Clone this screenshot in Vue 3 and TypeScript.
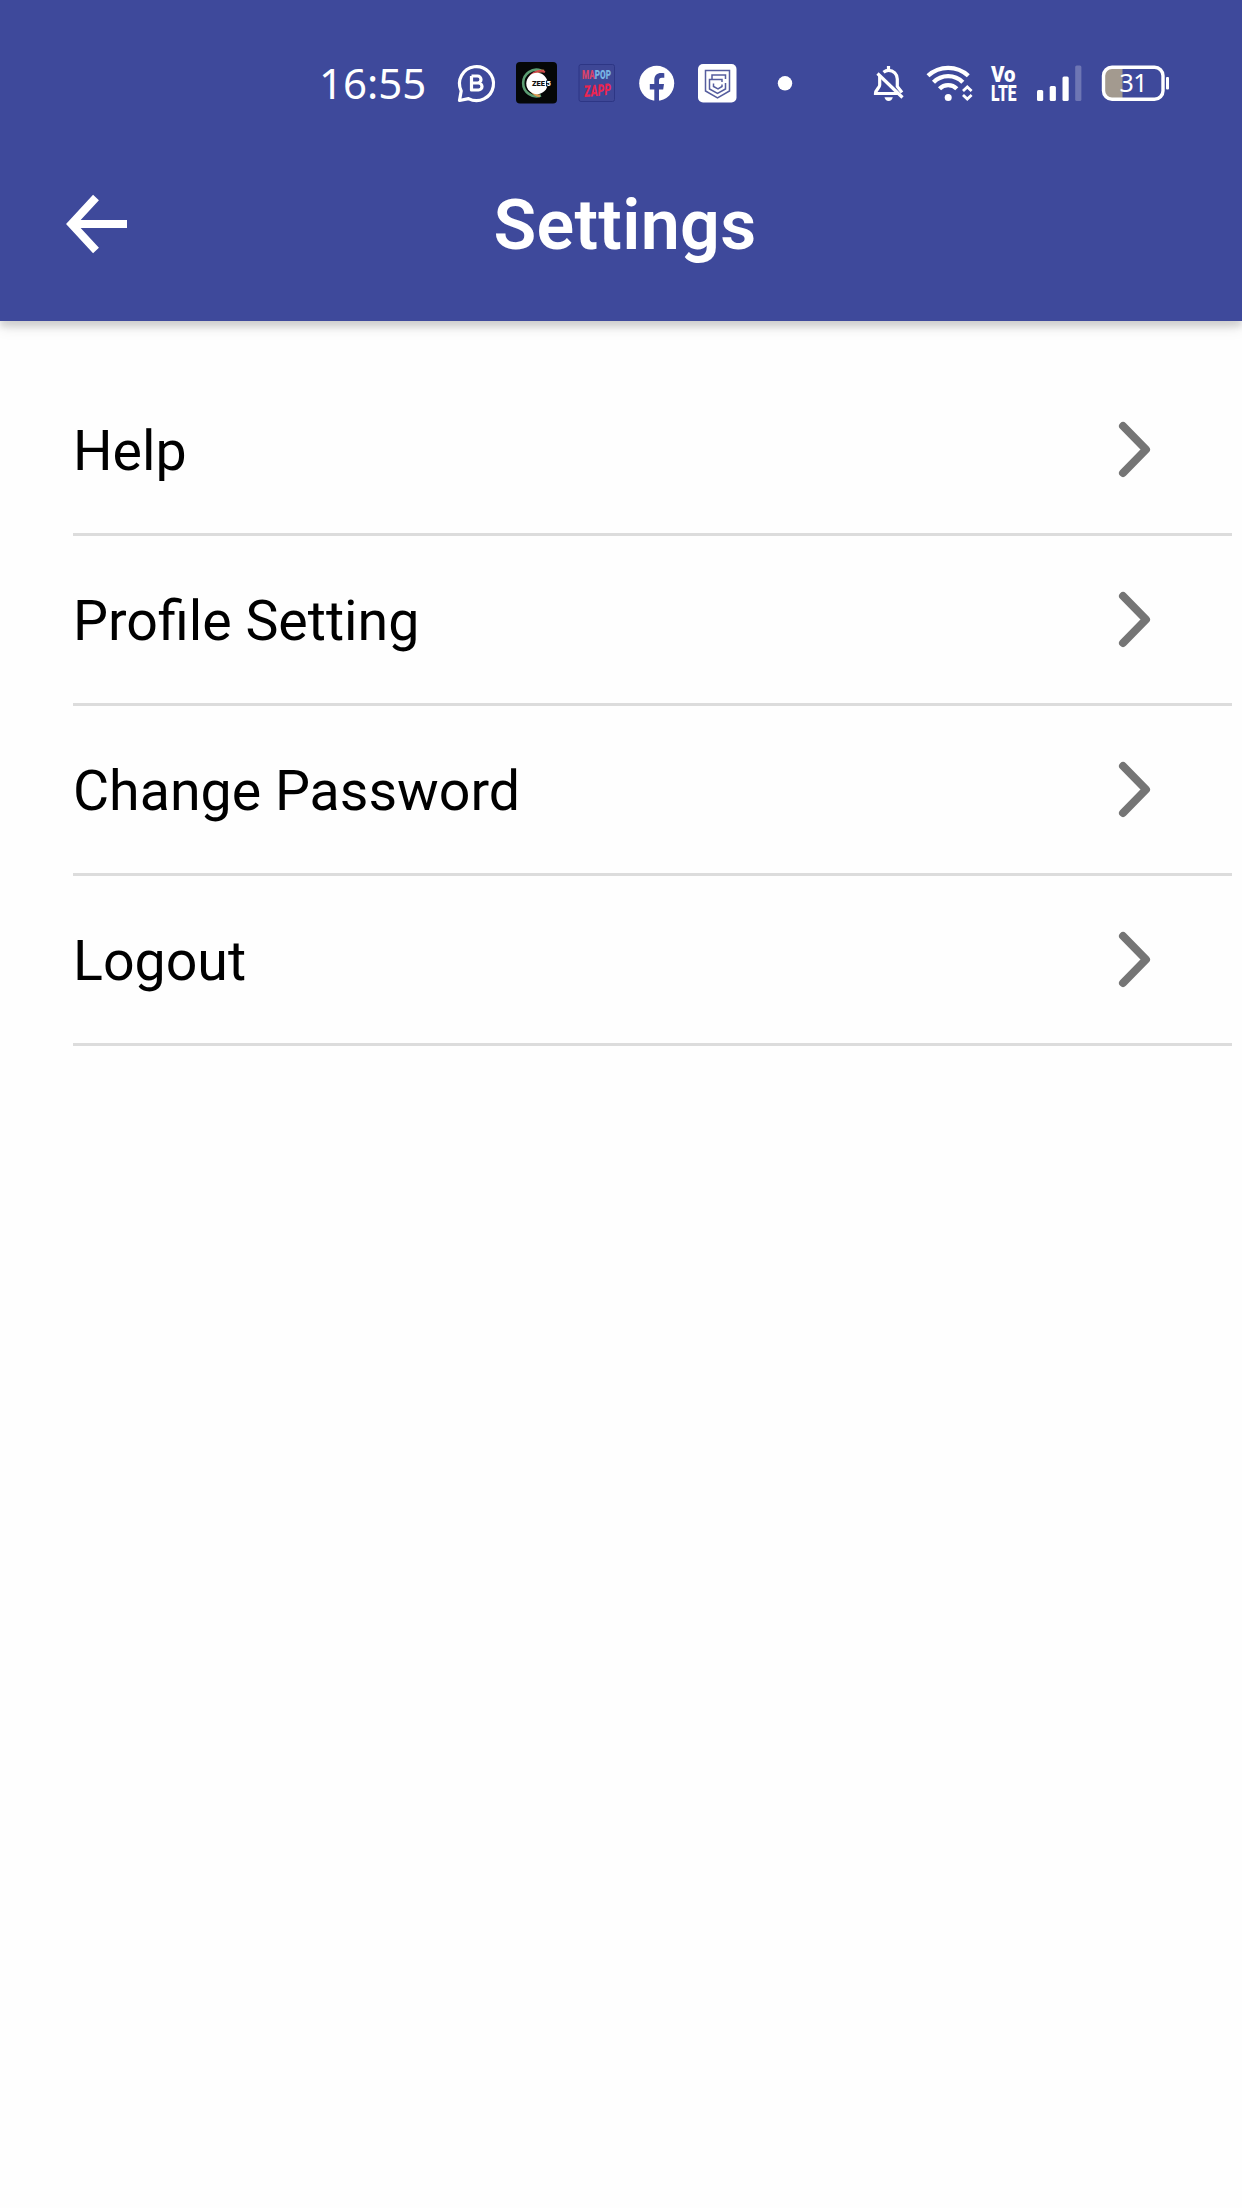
<script setup lang="ts">
interface SettingItem {
  id: string
  label: string
}

const items: SettingItem[] = [
  { id: 'help', label: 'Help' },
  { id: 'profile', label: 'Profile Setting' },
  { id: 'password', label: 'Change Password' },
  { id: 'logout', label: 'Logout' },
]
</script>

<template>
  <div class="screen">
    <header class="header">
      <div class="status">
        <span class="time">16:55</span>
        <div class="notifications">
          <svg class="icon" width="42" height="46" viewBox="456 60 42 46">
            <path d="M459.5 100.5 L461.2 91 A17 17 0 1 1 468.5 98.6 Z" fill="none" stroke="#fff" stroke-width="3.2" stroke-linejoin="round" />
            <path d="M471.500 76 H477.500 A3.400 3.400 0 0 1 477.500 83 H471.500 M471.500 76 V90 H478.500 A3.500 3.500 0 0 0 478.500 83" fill="none" stroke="#fff" stroke-width="3.2" stroke-linejoin="round" />
          </svg>
          <svg class="icon" width="42" height="46" viewBox="516 60 42 46">
            <rect x="516" y="62" width="41" height="41.500" rx="4" fill="#050707" />
            <path d="M541 70.500 A13.300 13.300 0 1 0 541 95.500" fill="none" stroke="#5b9d72" stroke-width="2.600" />
            <path d="M544 71 A12.500 12.500 0 1 0 540 96" fill="none" stroke="#d99a55" stroke-width="2.600" />
            <path d="M545 72 A12 12 0 0 0 530 77" fill="none" stroke="#c94448" stroke-width="2" />
            <circle cx="537" cy="83.500" r="10.700" fill="#fff" />
            <path d="M546 80.500 H552 V86.500 H546 Z" fill="#050707" />
            <text class="zee" y="86"><tspan x="532">ZEE</tspan><tspan x="546.500" fill="#fff">5</tspan></text>
          </svg>
          <svg class="icon" width="38" height="46" viewBox="578 60 38 46">
            <rect x="579" y="64.500" width="35.500" height="37" rx="2" fill="#3e4796" stroke="#2d3685" stroke-width="1" />
            <text class="zapp-top" x="582" y="79" textLength="29" lengthAdjust="spacingAndGlyphs" fill="#d8436a">MA<tspan fill="#78b4e4">POP</tspan></text>
            <text class="zapp" x="584" y="96" textLength="27" lengthAdjust="spacingAndGlyphs" transform="rotate(-5 597 90)">ZAPP</text>
          </svg>
          <svg class="icon" width="38" height="46" viewBox="638 60 38 46">
            <circle cx="656.700" cy="83.300" r="17.500" fill="#fff" />
            <path d="M654.300 102 V89.500 H649.800 V84 H654.300 V80.200 C654.300 75.500 657 73 661.200 73 C662.800 73 664 73.200 664.300 73.300 V77.800 H662 C659.800 77.800 659 79.100 659 80.800 V84 H664 L663.200 89.500 H659 V102 Z" fill="#3e499b" />
          </svg>
          <svg class="icon" width="40" height="46" viewBox="697 60 40 46">
            <rect x="698" y="64" width="38.500" height="38.500" rx="5" fill="#fff" />
            <g fill="none" stroke="#555d9e" stroke-width="1.500">
              <path d="M705.500 70.500 H729.500 V91 L717.500 98 L705.500 91 Z" />
              <path d="M725.500 79 V75 H712 V79 M725.500 83 V89 L717.500 93.500 L709.500 89 V79.500 H722 V82" />
              <path d="M722 84.500 V86.500 L718 88.800 L713.500 86.500 V83.500" />
            </g>
          </svg>
          <svg class="icon" width="18" height="46" viewBox="776 60 18 46">
            <circle cx="785" cy="83.300" r="7.200" fill="#fff" />
          </svg>
        </div>
        <div class="system">
          <svg class="icon" width="34" height="46" viewBox="871 60 34 46">
            <g fill="none" stroke="#fff" stroke-width="3.200">
              <path d="M883.500 72.300 C885.300 70.800 887 70.300 888.500 70.300 C893.500 70.300 897.300 74 897.300 79 V86.500 L902 92.500" />
              <path d="M888.500 66 V70" />
              <path d="M877.500 73.500 L902.500 97.500" />
              <path d="M879.700 76 V85 C879.700 88 875.500 89.500 875.500 93.500 H898" />
            </g>
            <path d="M884.500 97.200 H892.800 C892.300 99.600 890.700 101 888.600 101 C886.500 101 885 99.600 884.500 97.200 Z" fill="#fff" />
          </svg>
          <svg class="icon" width="48" height="46" viewBox="926 60 48 46">
            <g fill="none" stroke="#fff" stroke-width="4.300">
              <path d="M928 75.800 A29.500 29.500 0 0 1 968.300 75.800" />
              <path d="M933.500 82.300 A20.500 20.500 0 0 1 962.800 82.300" />
              <path d="M939.500 88.800 A12 12 0 0 1 956.800 88.800" />
              <path d="M963 91 L967.300 87 L971.600 91 M963 95 L967.300 99 L971.600 95" stroke-width="2.800" />
            </g>
            <circle cx="948.200" cy="97.500" r="3.500" fill="#fff" />
          </svg>
          <svg class="icon" width="28" height="46" viewBox="990 60 28 46">
            <text class="volte">
              <tspan x="991" y="82.300" textLength="24.500" lengthAdjust="spacingAndGlyphs">Vo</tspan>
              <tspan x="991" y="100.800" textLength="25.500" lengthAdjust="spacingAndGlyphs">LTE</tspan>
            </text>
          </svg>
          <svg class="icon" width="46" height="46" viewBox="1036 60 46 46">
            <g fill="#fff">
              <rect x="1037" y="90" width="6.200" height="11" rx="1.500" />
              <rect x="1049.700" y="86" width="6.200" height="15" rx="1.500" />
              <rect x="1062.500" y="76.500" width="6.200" height="24.500" rx="1.500" />
              <rect x="1075.200" y="65.500" width="6.200" height="35.500" rx="1.500" opacity="0.25" />
            </g>
          </svg>
          <svg class="icon" width="70" height="46" viewBox="1101 60 70 46">
            <path d="M1122.500 67.500 H1112 A7.500 7.500 0 0 0 1104 75.500 V91 A7.500 7.500 0 0 0 1112 99 H1122.500 Z" fill="#a39a8f" />
            <rect x="1103.500" y="67.200" width="59.500" height="32" rx="8.500" fill="none" stroke="#fff" stroke-width="3.400" />
            <rect x="1166" y="77" width="3" height="12.500" rx="1" fill="#fff" />
            <text class="level" x="1119.500" y="92" textLength="28">31</text>
          </svg>
        </div>
      </div>
      <div class="toolbar">
        <button class="back" type="button" aria-label="Back">
          <svg width="64" height="64" viewBox="0 0 64 64">
            <path d="M33 5.500 L8.500 32 L33 58.500 M11 32 H64" fill="none" stroke="#fff" stroke-width="8" />
          </svg>
        </button>
        <h1 class="title">Settings</h1>
      </div>
    </header>
    <main class="list">
      <div v-for="item in items" :key="item.id" class="row">
        <span class="label">{{ item.label }}</span>
        <svg class="chevron" width="34" height="58" viewBox="0 0 34 58">
          <path d="M5 5 L28 28.500 L5 52" fill="none" stroke="#757575" stroke-width="8" stroke-linecap="round" stroke-linejoin="round" />
        </svg>
      </div>
    </main>
  </div>
</template>

<style>
body {
  margin: 0;
  background: #fefefe;
}
</style>

<style scoped>
.screen {
  width: 1242px;
  height: 2208px;
  background: #fefefe;
  font-family: Roboto, sans-serif;
  overflow: hidden;
}
.header {
  box-sizing: border-box;
  height: 321px;
  padding-top: 60px;
  background: #3e499b;
  box-shadow: 0 6px 6px rgba(0, 0, 0, 0.11), 0 6px 14px rgba(0, 0, 0, 0.1);
}
.status {
  display: flex;
  height: 46px;
  padding-left: 319px;
}
.icon {
  display: block;
  flex: none;
  overflow: visible;
}
.time {
  width: 137px;
  font-family: 'Noto Sans', sans-serif;
  font-size: 42px;
  line-height: 45px;
  color: #fff;
  white-space: nowrap;
}
.notifications {
  display: flex;
  width: 415px;
}
.notifications .icon:nth-child(2) { margin-left: 18px; }
.notifications .icon:nth-child(3) { margin-left: 20px; }
.notifications .icon:nth-child(4) { margin-left: 22px; }
.notifications .icon:nth-child(5) { margin-left: 21px; }
.notifications .icon:nth-child(6) { margin-left: 39px; }
.system {
  display: flex;
}
.system .icon:nth-child(2) { margin-left: 21px; }
.system .icon:nth-child(3) { margin-left: 16px; }
.system .icon:nth-child(4) { margin-left: 18px; }
.system .icon:nth-child(5) { margin-left: 19px; }
.zee {
  font: 900 7.5px Roboto, sans-serif;
  fill: #111;
}
.zapp-top {
  font: 900 12px Roboto, sans-serif;
}
.zapp {
  font: italic 900 16px Roboto, sans-serif;
  fill: #ec2450;
}
.volte {
  font: 900 22px Roboto, sans-serif;
  fill: #fff;
}
.level {
  font: 400 25px 'Noto Sans', sans-serif;
  fill: #fff;
}
.toolbar {
  display: grid;
  grid-template-columns: 128px 1fr 128px;
  align-items: center;
  height: 236px;
}
.back {
  display: block;
  margin: 0 0 0 63px;
  padding: 0;
  border: 0;
  background: none;
}
.back svg {
  display: block;
}
.title {
  margin: 0;
  padding: 2px 0 0 8px;
  font-size: 70px;
  font-weight: 600;
  letter-spacing: 0.3px;
  line-height: 80px;
  text-align: center;
  color: #fff;
}
.list {
  padding: 45px 10px 0 73px;
}
.row {
  box-sizing: border-box;
  display: flex;
  align-items: center;
  justify-content: space-between;
  height: 170px;
  padding-right: 80px;
  border-bottom: 3px solid #dcdcdc;
}
.label {
  padding-top: 5px;
  font-size: 55.5px;
  line-height: 64px;
  color: #000;
}
.chevron {
  display: block;
}
</style>
